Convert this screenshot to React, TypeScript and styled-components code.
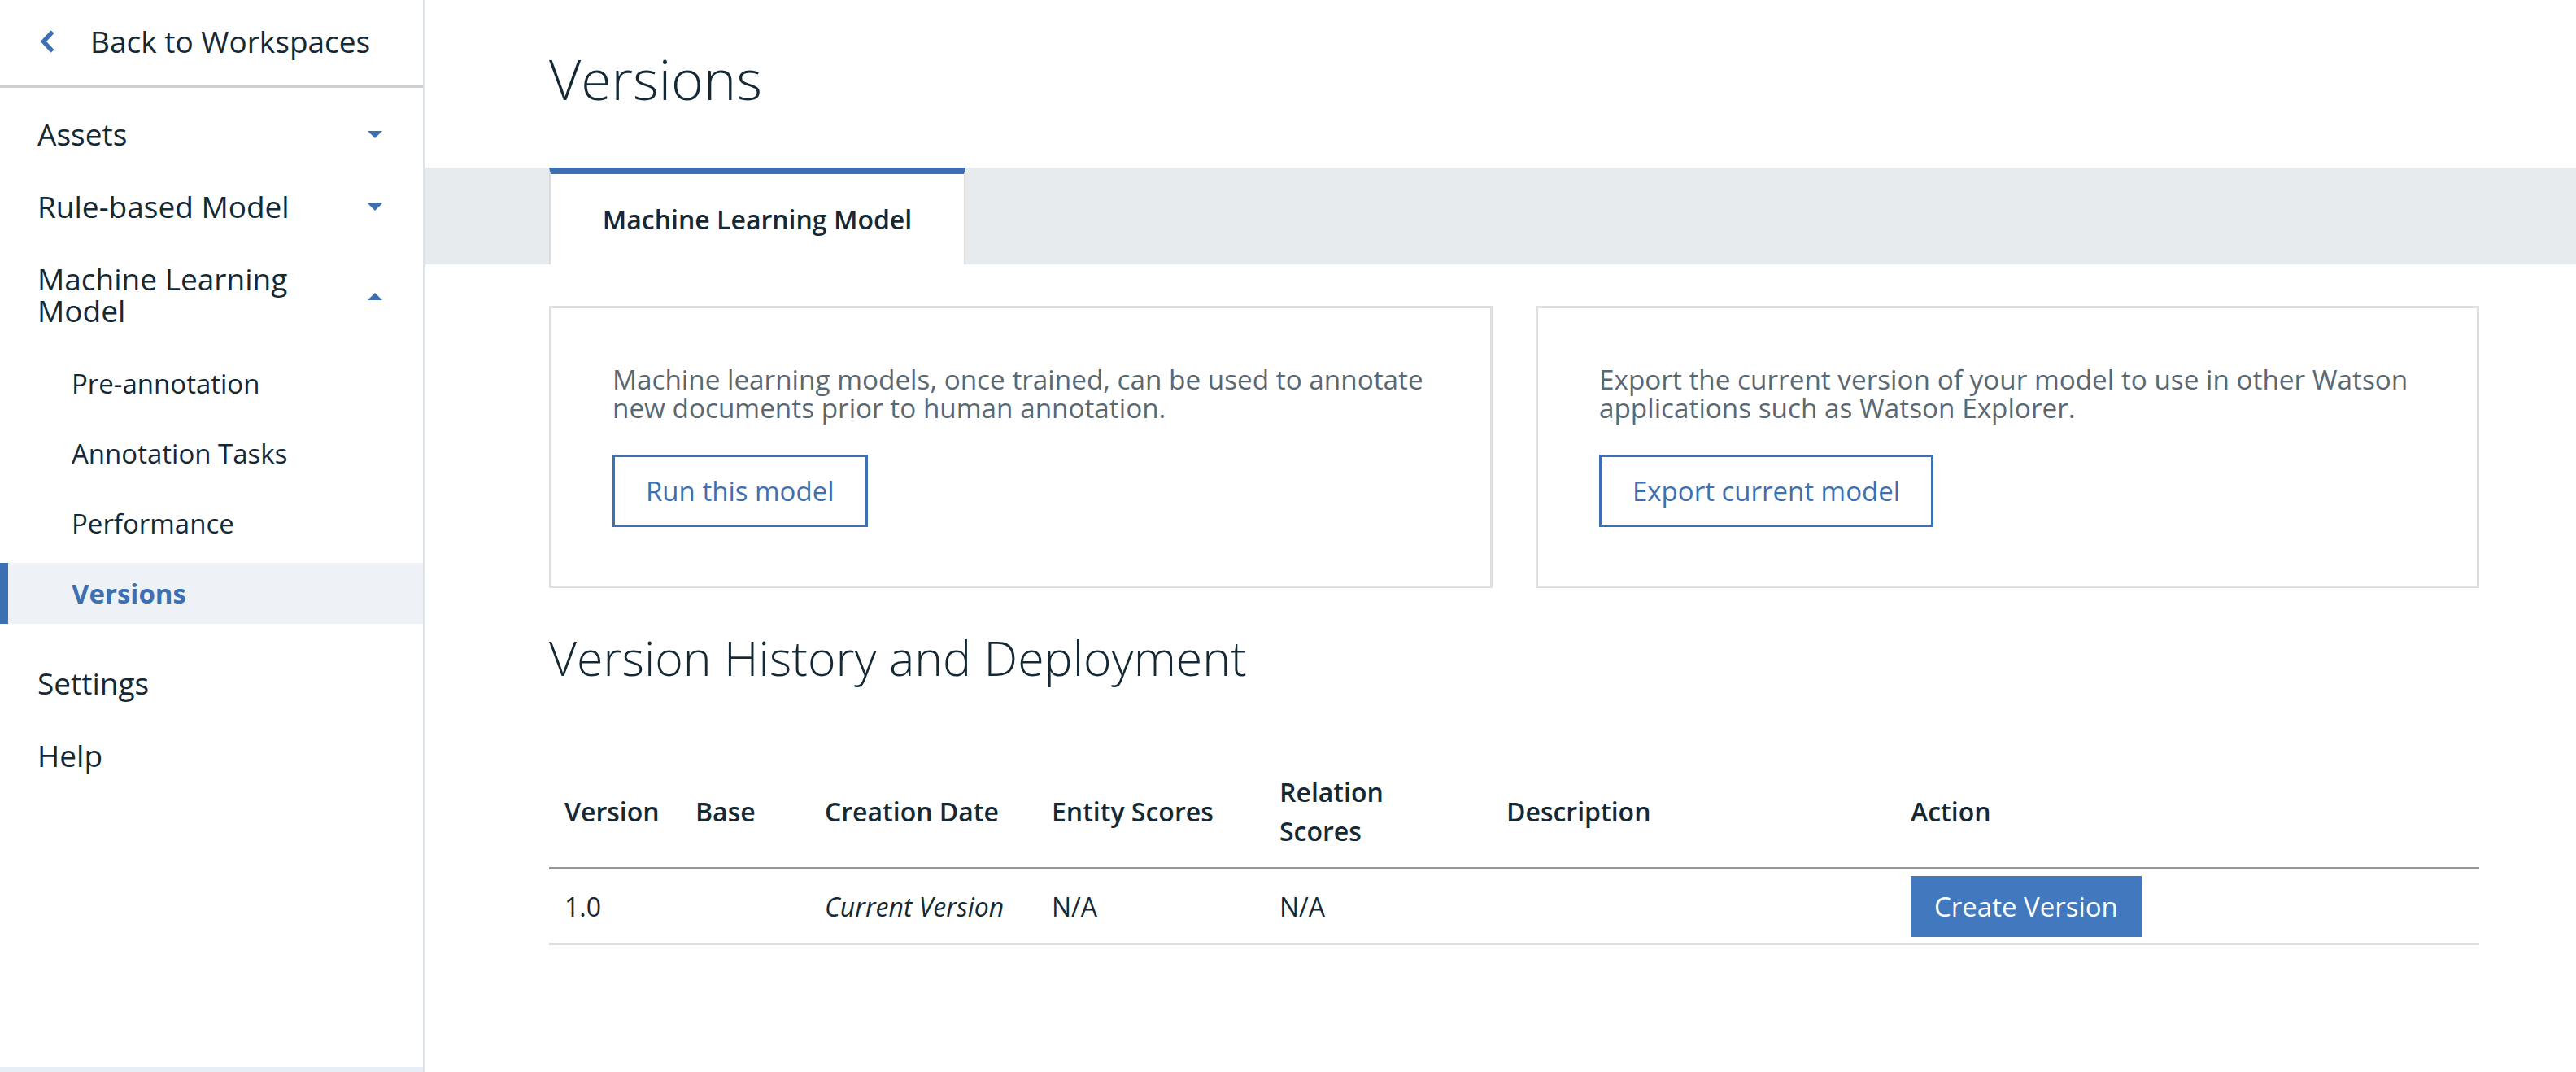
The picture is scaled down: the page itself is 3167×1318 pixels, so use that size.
import React from "react";
import styled, { createGlobalStyle } from "styled-components";

const GlobalStyle = createGlobalStyle`
  html, body {
    margin: 0;
    padding: 0;
    background: #ffffff;
  }
  body {
    font-family: "Open Sans", "Noto Sans", sans-serif;
    color: #152935;
  }
  * {
    box-sizing: border-box;
  }
`;

const BLUE = "#3d70b2";

const Page = styled.div`
  display: flex;
  width: 3167px;
  min-height: 1318px;
`;

// Barra lateral
const Sidebar = styled.aside`
  width: 523px;
  flex-shrink: 0;
  min-height: 1318px;
  border-right: 3px solid #dde2e6;
  display: flex;
  flex-direction: column;
`;

const BackRow = styled.div`
  height: 108px;
  border-bottom: 3px solid #cfcfcf;
  display: flex;
  align-items: center;
  gap: 44px;
  padding: 0 0 4px 49px;
  font-size: 37px;
  color: #152935;
`;

const NavList = styled.nav`
  display: flex;
  flex-direction: column;
  padding-top: 12px;
`;

const NavItem = styled.div<{ $tall?: boolean }>`
  height: ${(p) => (p.$tall ? 127 : 89)}px;
  display: flex;
  align-items: center;
  justify-content: space-between;
  padding: 0 50px 0 46px;
  font-size: 37px;
  line-height: 39px;
`;

const NavLabel = styled.span<{ $narrow?: boolean }>`
  max-width: ${(p) => (p.$narrow ? "340px" : "none")};
`;

const Caret = styled.span<{ $up?: boolean }>`
  width: 0;
  height: 0;
  border-left: 9px solid transparent;
  border-right: 9px solid transparent;
  ${(p) =>
    p.$up
      ? `border-bottom: 9px solid ${BLUE};`
      : `border-top: 9px solid ${BLUE};`}
  margin-top: ${(p) => (p.$up ? "6px" : "2px")};
`;

const SubList = styled.div`
  display: flex;
  flex-direction: column;
  gap: 11px;
  padding-top: 9px;
  margin-bottom: 28px;
`;

const SubItem = styled.div<{ $active?: boolean }>`
  height: 75px;
  display: flex;
  align-items: center;
  padding-left: 88px;
  font-size: 33px;
  color: ${(p) => (p.$active ? BLUE : "#152935")};
  font-weight: ${(p) => (p.$active ? 700 : 400)};
  background: ${(p) => (p.$active ? "#eef1f5" : "transparent")};
  box-shadow: ${(p) => (p.$active ? `inset 10px 0 0 ${BLUE}` : "none")};
`;

const SidebarFooter = styled.div`
  margin-top: auto;
  height: 6px;
  background: #e8eef6;
`;

// Conteúdo principal
const Main = styled.main`
  flex: 1;
  display: flex;
  flex-direction: column;
`;

const Title = styled.h1`
  margin: 0;
  height: 206px;
  display: flex;
  align-items: center;
  padding: 0 0 14px 152px;
  font-size: 68px;
  font-weight: 300;
  color: #152935;
`;

const TabBand = styled.div`
  height: 119px;
  background: #e8ebed;
  padding-left: 152px;
  display: flex;
`;

const Tab = styled.div`
  width: 512px;
  background: #ffffff;
  border-top: 8px solid ${BLUE};
  border-left: 2px solid #dcdcdc;
  border-right: 2px solid #dcdcdc;
  display: flex;
  align-items: center;
  justify-content: center;
  font-size: 32px;
  font-weight: 600;
  color: #152935;
`;

const Content = styled.div`
  padding: 51px 119px 0 152px;
`;

const Cards = styled.div`
  display: grid;
  grid-template-columns: 1fr 1fr;
  gap: 53px;
`;

const Card = styled.section`
  height: 347px;
  border: 3px solid #dfdfdf;
  padding: 70px 76px 0 75px;
`;

const CardText = styled.p`
  margin: 0 0 40px;
  font-size: 33.3px;
  line-height: 35px;
  color: #5a6872;
`;

const OutlineButton = styled.button`
  height: 89px;
  padding: 0 38px;
  background: #ffffff;
  border: 3px solid ${BLUE};
  color: ${BLUE};
  font-family: inherit;
  font-size: 33px;
  cursor: pointer;
`;

const SectionTitle = styled.h2`
  margin: 45px 0 80px;
  height: 80px;
  line-height: 80px;
  font-size: 59px;
  font-weight: 300;
  color: #152935;
`;

const Table = styled.table`
  width: 100%;
  border-collapse: collapse;
  table-layout: fixed;
`;

const Th = styled.th`
  text-align: left;
  vertical-align: middle;
  padding: 22px 19px 20px;
  font-size: 32px;
  line-height: 48px;
  font-weight: 600;
  color: #152935;
  border-bottom: 3px solid #969696;
`;

const Td = styled.td<{ $italic?: boolean }>`
  height: 93px;
  padding: 0 19px;
  vertical-align: middle;
  font-size: 32px;
  font-style: ${(p) => (p.$italic ? "italic" : "normal")};
  color: #152935;
  border-bottom: 3px solid #dedede;
`;

const PrimaryButton = styled.button`
  display: block;
  height: 75px;
  padding: 0 29px;
  background: #4178be;
  border: none;
  color: #ffffff;
  font-family: inherit;
  font-size: 33px;
  cursor: pointer;
`;

const ChevronLeft = () => (
  <svg width="18" height="30" viewBox="0 0 18 30">
    <path d="M15.5 3 L4.5 15 L15.5 27" fill="none" stroke={BLUE} strokeWidth="5.5" />
  </svg>
);

const subItems = ["Pre-annotation", "Annotation Tasks", "Performance", "Versions"];

const columns = [
  { label: "Version", width: 161 },
  { label: "Base", width: 159 },
  { label: "Creation Date", width: 279 },
  { label: "Entity Scores", width: 280 },
  { label: "Relation Scores", width: 279, narrow: true },
  { label: "Description", width: 497 },
  { label: "Action", width: 718 },
];

const App: React.FC = () => {
  return (
    <>
      <GlobalStyle />
      <Page>
        <Sidebar>
          <BackRow>
            <ChevronLeft />
            <span>Back to Workspaces</span>
          </BackRow>
          <NavList>
            <NavItem>
              <NavLabel>Assets</NavLabel>
              <Caret />
            </NavItem>
            <NavItem>
              <NavLabel>Rule-based Model</NavLabel>
              <Caret />
            </NavItem>
            <NavItem $tall>
              <NavLabel $narrow>Machine Learning Model</NavLabel>
              <Caret $up />
            </NavItem>
            <SubList>
              {subItems.map((s) => (
                <SubItem key={s} $active={s === "Versions"}>
                  {s}
                </SubItem>
              ))}
            </SubList>
            <NavItem>
              <NavLabel>Settings</NavLabel>
            </NavItem>
            <NavItem>
              <NavLabel>Help</NavLabel>
            </NavItem>
          </NavList>
          <SidebarFooter />
        </Sidebar>

        <Main>
          <Title>Versions</Title>
          <TabBand>
            <Tab>Machine Learning Model</Tab>
          </TabBand>
          <Content>
            <Cards>
              <Card>
                <CardText>
                  Machine learning models, once trained, can be used to annotate
                  new documents prior to human annotation.
                </CardText>
                <OutlineButton>Run this model</OutlineButton>
              </Card>
              <Card>
                <CardText>
                  Export the current version of your model to use in other Watson
                  applications such as Watson Explorer.
                </CardText>
                <OutlineButton>Export current model</OutlineButton>
              </Card>
            </Cards>

            <SectionTitle>Version History and Deployment</SectionTitle>

            <Table>
              <colgroup>
                {columns.map((c) => (
                  <col key={c.label} style={{ width: c.width }} />
                ))}
              </colgroup>
              <thead>
                <tr>
                  {columns.map((c) => (
                    <Th key={c.label}>
                      {c.narrow ? (
                        <>
                          Relation
                          <br />
                          Scores
                        </>
                      ) : (
                        c.label
                      )}
                    </Th>
                  ))}
                </tr>
              </thead>
              <tbody>
                <tr>
                  <Td>1.0</Td>
                  <Td></Td>
                  <Td $italic>Current Version</Td>
                  <Td>N/A</Td>
                  <Td>N/A</Td>
                  <Td></Td>
                  <Td>
                    <PrimaryButton>Create Version</PrimaryButton>
                  </Td>
                </tr>
              </tbody>
            </Table>
          </Content>
        </Main>
      </Page>
    </>
  );
};

export default App;
